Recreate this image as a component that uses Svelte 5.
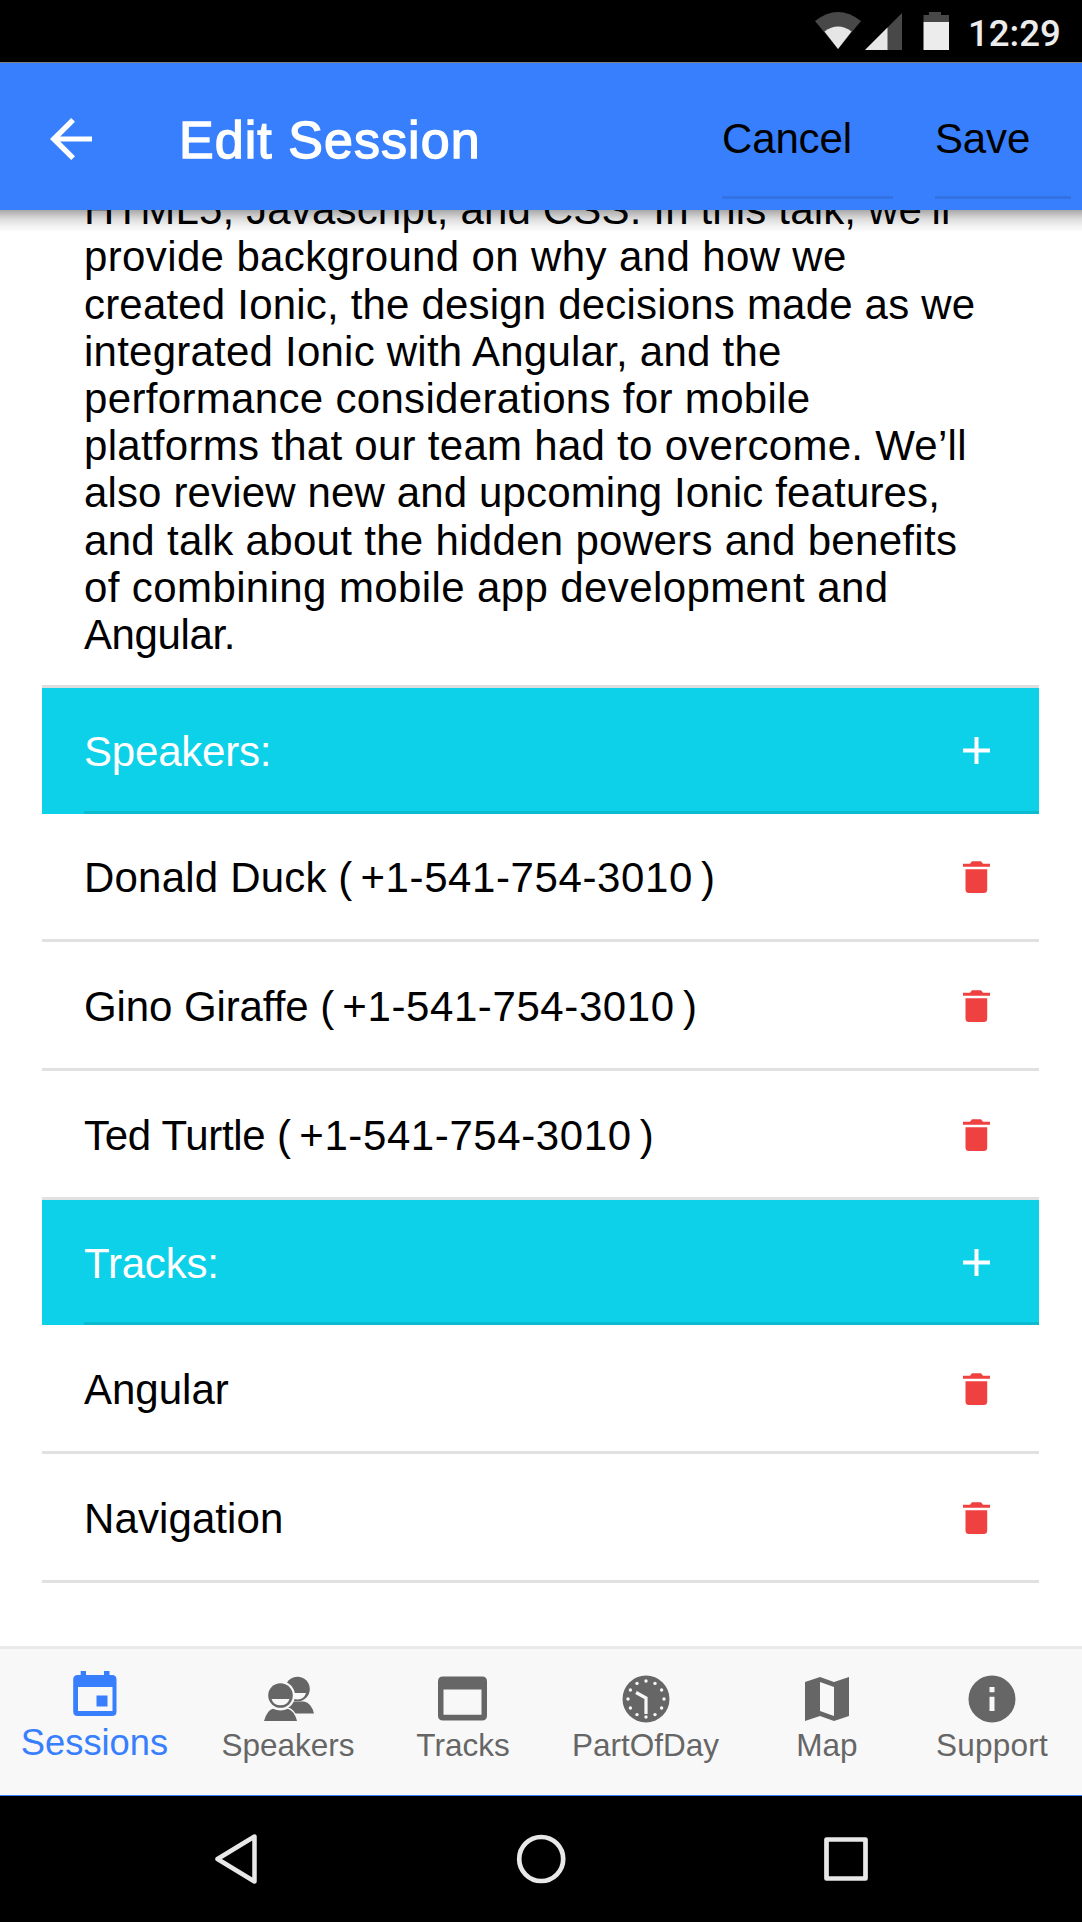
<script>
  // Each line carries the tracking (px) that sets its measure
  const description = [
    { text: 'HTML5, Javascript, and CSS. In this talk, we’ll', tracking: 0.16 },
    { text: 'provide background on why and how we', tracking: 0.37 },
    { text: 'created Ionic, the design decisions made as we', tracking: 0.19 },
    { text: 'integrated Ionic with Angular, and the', tracking: 0.23 },
    { text: 'performance considerations for mobile', tracking: 0.33 },
    { text: 'platforms that our team had to overcome. We’ll', tracking: 0.28 },
    { text: 'also review new and upcoming Ionic features,', tracking: 0.14 },
    { text: 'and talk about the hidden powers and benefits', tracking: 0.31 },
    { text: 'of combining mobile app development and', tracking: 0.39 },
    { text: 'Angular.', tracking: -0.4 }
  ];

  const groups = [
    {
      title: 'Speakers:',
      items: [
        { name: 'Donald Duck', phone: '+1-541-754-3010', tracking: 0.2 },
        { name: 'Gino Giraffe', phone: '+1-541-754-3010', tracking: -0.1 },
        { name: 'Ted Turtle', phone: '+1-541-754-3010', tracking: -0.3 }
      ]
    },
    {
      title: 'Tracks:',
      items: [
        { name: 'Angular', tracking: 0 },
        { name: 'Navigation', tracking: 0.1 }
      ]
    }
  ];

  const tabs = [
    { id: 'sessions', label: 'Sessions' },
    { id: 'speakers', label: 'Speakers' },
    { id: 'tracks', label: 'Tracks' },
    { id: 'part', label: 'PartOfDay' },
    { id: 'map', label: 'Map' },
    { id: 'support', label: 'Support' }
  ];

  // Hour marks of the clock icon
  const marks = Array.from({ length: 12 }, (_, i) => {
    const a = (i * Math.PI) / 6;
    return { x: 24 + 18 * Math.sin(a), y: 24 - 18 * Math.cos(a) };
  });
</script>

<div class="phone">
  <div class="status">
    <svg class="signals" viewBox="0 0 150 62" width="150" height="62" aria-hidden="true">
      <path d="M0 21Q23 3 46 21L23 49Z" fill="#484848" />
      <path d="M9.5 31.5Q23 21.500 36.500 31.500L23 49Z" fill="#e6e6e6" />
      <path d="M87 13V50H50Z" fill="#484848" />
      <path d="M72.500 27.500V50H50Z" fill="#e6e6e6" />
      <path d="M114 12h12v3h8v7h-25.500v-7h5.500z" fill="#484848" />
      <path d="M108.500 22H134v28h-25.500z" fill="#ececec" />
    </svg>
    <span class="time">12:29</span>
  </div>

  <header class="bar">
    <svg class="back" viewBox="0 0 42 42" width="42" height="42" aria-hidden="true">
      <path d="M42 18.400v5.200H10.200L25 38.300 21.200 42 0 21 21.200 0 25 3.700 10.200 18.400z" fill="#fff" />
    </svg>
    <h1>Edit Session</h1>
    <button class="action cancel">Cancel</button>
    <button class="action save">Save</button>
  </header>

  <main>
    <p class="description">
      {#each description as line}
        <span style:letter-spacing="{line.tracking}px">{line.text}</span>
      {/each}
    </p>
    <div class="list">
      {#each groups as group}
        <div class="head">
          <span>{group.title}</span>
          <svg viewBox="0 0 27 27" width="27" height="27" aria-hidden="true">
            <path d="M11.500 0h4v11.500H27v4H15.500V27h-4V15.500H0v-4h11.500z" fill="#fff" />
          </svg>
        </div>
        {#each group.items as item}
          <div class="row">
            <div class="label">
              <span class="name" style:letter-spacing="{item.tracking}px">{item.name}</span>
              {#if item.phone}
                ( <span class="number">{item.phone}</span> )
              {/if}
            </div>
            <svg viewBox="0 0 27 32" width="27" height="32" aria-hidden="true">
              <path
                d="M0 2.700h7l2-2.400h9l2 2.400h7v3H0zM2.500 8.200h21.700v20.300q0 3.500-3.500 3.500H6q-3.500 0-3.500-3.500z"
                fill="#f04141"
              />
            </svg>
          </div>
        {/each}
      {/each}
    </div>
  </main>

  <nav class="tabs">
    {#each tabs as tab}
      <div class="tab {tab.id}" class:active={tab.id === 'sessions'}>
        <svg class="icon" viewBox="0 0 48 48" width="48" height="48" fill="currentColor" aria-hidden="true">
          {#if tab.id === 'sessions'}
            <path
              fill-rule="evenodd"
              d="M9.700 1H15v4h18V1h5.500v4h2.500q4.500 0 4.500 4.500v32q0 4.500-4.500 4.500H6.700q-4.500 0-4.500-4.500v-32Q2.200 5 6.700 5h3zM7 17v24h34.500V17zM25.500 25.500h11v11h-11z"
            />
          {:else if tab.id === 'speakers'}
            <circle cx="33.500" cy="14" r="12.300" />
            <path d="M23 39q0-11 5-12.500h12Q47.500 28 50 38.500H30z" />
            <path d="M25 18h17q-2 6.500-8.500 6.500T25 18z" fill="#f8f8f8" />
            <circle cx="16.500" cy="20.500" r="14.500" fill="#f8f8f8" />
            <path d="M1 46q2-13 10-14h12q8 1.500 12 14z" fill="#f8f8f8" />
            <circle cx="16.500" cy="20.500" r="12.300" />
            <path d="M0 46q3-11 9-12.300 7.500 3.500 15 0 6.500 2.300 9 12.300z" />
            <path d="M7.500 24h18q-2 6.300-9 6.300T7.500 24z" fill="#f8f8f8" />
          {:else if tab.id === 'tracks'}
            <path
              fill-rule="evenodd"
              d="M4 1.500h39q5 0 5 5v34q0 5-5 5H4q-5 0-5-5v-34q0-5 5-5zM4.500 14.500v25.300h38V14.500z"
            />
          {:else if tab.id === 'part'}
            <circle cx="24" cy="24" r="23.500" />
            {#each marks as m}
              <circle cx={m.x} cy={m.y} r="1.700" fill="#f8f8f8" />
            {/each}
            <path d="M24 39V23L14 17.500" fill="none" stroke="#f8f8f8" stroke-width="3.200" />
          {:else if tab.id === 'map'}
            <path fill-rule="evenodd" d="M2 7l15-5 14 5 15-5v39l-15 5-14-5-15 5zM17 7v29l14 5V12z" />
          {:else}
            <path
              fill-rule="evenodd"
              d="M24 .5a23.500 23.500 0 1 0 0 47 23.500 23.500 0 0 0 0-47zM21.500 12h5v5.300h-5zM21.500 21.700h5V36h-5z"
            />
          {/if}
        </svg>
        <span>{tab.label}</span>
      </div>
    {/each}
  </nav>

  <div class="system">
    <svg viewBox="0 0 48 56" width="48" height="56" fill="none" stroke="#e8e8e8" stroke-width="4.500" stroke-linejoin="round" aria-hidden="true">
      <path d="M41.500 5.500v45L4.500 28z" />
    </svg>
    <svg viewBox="0 0 52 52" width="52" height="52" fill="none" stroke="#e8e8e8" stroke-width="4.700" aria-hidden="true">
      <circle cx="25.200" cy="26" r="22" />
    </svg>
    <svg viewBox="0 0 48 48" width="48" height="48" fill="none" stroke="#e8e8e8" stroke-width="4.700" stroke-linejoin="round" aria-hidden="true">
      <path d="M4.500 4.500h39v39h-39z" />
    </svg>
  </div>
</div>

<style>
  :global(body) {
    background: #000;
  }
  .phone {
    display: flex;
    flex-direction: column;
    width: 1082px;
    height: 1922px;
    overflow: hidden;
    background: #fff;
    color: #000;
    font-family: 'Liberation Sans', Arial, sans-serif;
    font-size: 42px;
    font-kerning: normal;
  }
  .status {
    display: flex;
    justify-content: flex-end;
    flex: none;
    box-sizing: border-box;
    height: 63px;
    padding-right: 21px;
    border-bottom: 1px solid #808080;
    background: #000;
    color: #ececec;
  }
  .time {
    width: 93px;
    font: 500 36.6px/67px Roboto, sans-serif;
    white-space: nowrap;
  }
  .signals {
    margin-right: 3px;
  }
  .bar {
    position: relative;
    z-index: 1;
    display: flex;
    flex: none;
    height: 147px;
    background: #387ffd;
  }
  .bar::after {
    content: '';
    position: absolute;
    top: 100%;
    left: 0;
    width: 100%;
    height: 21px;
    background: linear-gradient(rgba(0, 0, 0, 0.34), rgba(0, 0, 0, 0.15) 40%, rgba(0, 0, 0, 0.05) 75%, rgba(0, 0, 0, 0.02));
  }
  .back {
    flex: none;
    margin: 55px 87px 0 50px;
  }
  h1 {
    flex: 1;
    margin: 0;
    color: #fff;
    font-size: 52px;
    font-weight: 400;
    line-height: 154px;
    letter-spacing: 1.05px;
    -webkit-text-stroke: 1.400px #fff;
  }
  .action {
    box-sizing: border-box;
    height: 136px;
    padding: 18px 0 0;
    border: 0;
    border-bottom: 3px solid #3372e3;
    background: none;
    color: #000;
    font: inherit;
    line-height: 48px;
    letter-spacing: -0.15px;
    text-align: left;
  }
  .cancel {
    width: 171px;
    margin-right: 42px;
  }
  .save {
    width: 136px;
    margin-right: 11px;
  }
  main {
    flex: none;
    box-sizing: border-box;
    height: 1436px;
    padding: 0 43px 0 42px;
    overflow: hidden;
  }
  .description {
    margin: -23.800px 0 0;
    padding: 0 0 26.800px 42px;
  }
  .description span {
    display: block;
    line-height: 47.200px;
    white-space: nowrap;
  }
  .list {
    border-top: 3px solid #dedede;
  }
  .head,
  .row {
    display: flex;
    align-items: center;
    justify-content: space-between;
    box-sizing: border-box;
    padding: 0 49px 0 42px;
  }
  .head {
    position: relative;
    height: 125.500px;
    padding-top: 3px;
    background: #0cd1e8;
    color: #fff;
    letter-spacing: -0.2px;
  }
  .head svg {
    margin-bottom: 3px;
  }
  .head::after {
    content: '';
    position: absolute;
    right: 0;
    bottom: 0;
    left: 42px;
    height: 3px;
    background: #0bbcd1;
  }
  .row {
    height: 128.750px;
    padding-top: 2px;
    border-bottom: 3px solid #e1e1e1;
  }
  .label {
    padding-top: 2px;
    white-space: nowrap;
    word-spacing: -3.500px;
  }
  .name {
    margin-right: 3.500px;
    word-spacing: 0;
  }
  .number {
    letter-spacing: 0.6px;
  }
  .tabs {
    display: flex;
    flex: none;
    box-sizing: border-box;
    height: 150px;
    border-top: 3px solid #e9e9e9;
    border-bottom: 1px solid #387ffd;
    background: #f8f8f8;
    color: #666;
    font-size: 31.500px;
  }
  .tab {
    display: flex;
    flex-direction: column;
    align-items: center;
    padding-top: 26px;
  }
  .tab span {
    line-height: 40px;
    margin-top: 2px;
  }
  .icon {
    overflow: visible;
  }
  .sessions {
    width: 189px;
  }
  .speakers {
    width: 198px;
  }
  .tracks {
    width: 152px;
  }
  .part {
    width: 213px;
  }
  .map {
    width: 150px;
  }
  .support {
    width: 180px;
    letter-spacing: 0.25px;
  }
  .active {
    padding-top: 21px;
    color: #387ffd;
    font-size: 36.300px;
  }
  .active span {
    margin-top: 5px;
  }
  .system {
    display: flex;
    flex: 1;
    align-items: center;
    justify-content: space-between;
    padding: 0 212px 0 213px;
    background: #000;
  }
</style>
